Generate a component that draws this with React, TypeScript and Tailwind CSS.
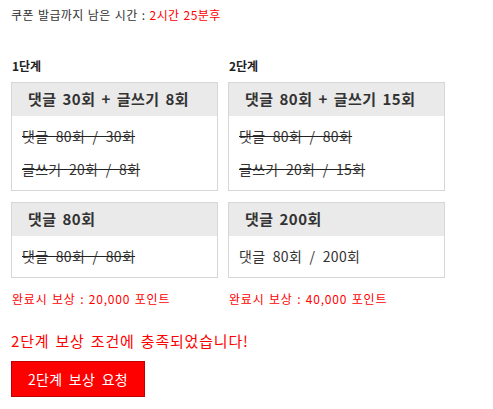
import React from "react";

const font = "font-['Noto_Sans_CJK_KR','Noto_Sans',sans-serif]";

function Card({ title, rows }: { title: string; rows: { text: string; done: boolean }[] }) {
  return (
    <div className="border border-[#d6d6d6] bg-white">
      <div className="h-[33px] flex items-center pl-[16px] bg-[#eaeaea] text-[15px] font-bold text-[#333] tracking-[0.5px] [word-spacing:2px]">
        {title}
      </div>
      <div className="pl-[10px] py-[4px]">
        {rows.map((r, i) => (
          <div
            key={i}
            className={`h-[33px] leading-[33px] text-[14px] text-[#333] tracking-[0.3px] [word-spacing:4px] ${r.done ? "line-through decoration-[#222]" : ""}`}
          >
            {r.text}
          </div>
        ))}
      </div>
    </div>
  );
}

function Column({
  label,
  width,
  a,
  b,
  reward,
}: {
  label: string;
  width: string;
  a: React.ReactNode;
  b: React.ReactNode;
  reward: string;
}) {
  return (
    <div className={`flex flex-col ${width}`}>
      <div className="pl-[1px] text-[12px] leading-[16px] font-bold text-[#222]">{label}</div>
      <div className="mt-[8px]">{a}</div>
      <div className="mt-[11px]">{b}</div>
      <div className="mt-[13px] pl-[1px] text-[12px] leading-[16px] text-[#ff0000] tracking-[0.8px] [word-spacing:1px]">
        {reward}
      </div>
    </div>
  );
}

export default function App() {
  return (
    <div className={`${font} w-[493px] h-[409px] bg-white pl-[11px] pt-[7px]`}>
      <div className="text-[12px] leading-[16px] text-[#333] tracking-[0.4px] [word-spacing:1px]">
        쿠폰 발급까지 남은 시간 : <span className="text-[#ff0000]">2시간 25분후</span>
      </div>
      <div className="mt-[35px] flex gap-[10px]">
        <Column
          label="1단계"
          width="w-[207px]"
          a={
            <Card
              title="댓글 30회 + 글쓰기 8회"
              rows={[
                { text: "댓글 80회 / 30회", done: true },
                { text: "글쓰기 20회 / 8회", done: true },
              ]}
            />
          }
          b={<Card title="댓글 80회" rows={[{ text: "댓글 80회 / 80회", done: true }]} />}
          reward="완료시 보상 : 20,000 포인트"
        />
        <Column
          label="2단계"
          width="w-[217px]"
          a={
            <Card
              title="댓글 80회 + 글쓰기 15회"
              rows={[
                { text: "댓글 80회 / 80회", done: true },
                { text: "글쓰기 20회 / 15회", done: true },
              ]}
            />
          }
          b={<Card title="댓글 200회" rows={[{ text: "댓글 80회 / 200회", done: false }]} />}
          reward="완료시 보상 : 40,000 포인트"
        />
      </div>
      <div className="mt-[24px] text-[15px] leading-[20px] text-[#ff0000] tracking-[0.8px] [word-spacing:2px]">
        2단계 보상 조건에 충족되었습니다!
      </div>
      <button className="mt-[10px] w-[134px] h-[36px] flex items-center justify-center bg-[#ff0000] border border-[#c00000] text-white text-[14px] tracking-[0.3px] [word-spacing:3px]">
        2단계 보상 요청
      </button>
    </div>
  );
}
